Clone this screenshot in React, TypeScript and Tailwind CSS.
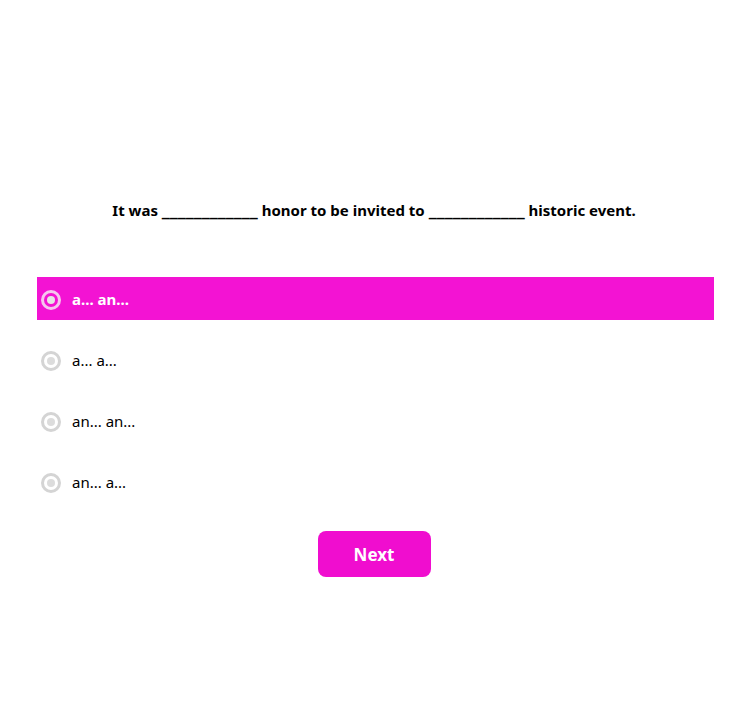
import React from "react";

const options = ["a... an...", "a... a...", "an... an...", "an... a..."];

function Radio({ selected }: { selected: boolean }) {
  return (
    <span
      className={
        "flex h-[20px] w-[20px] shrink-0 items-center justify-center rounded-full border-[3px] " +
        (selected ? "border-[#f6c6ee]" : "border-[#d4d4d4]")
      }
    >
      <span className={"h-[8px] w-[8px] rounded-full " + (selected ? "bg-[#e6e6e6]" : "bg-[#dcdcdc]")} />
    </span>
  );
}

export default function App() {
  return (
    <div className="h-[701px] w-[748px] bg-white" style={{ fontFamily: '"Noto Sans", "Open Sans", sans-serif' }}>
      <div className="h-[222px] pt-[198px] text-center text-[15px] font-bold leading-[24px] text-black">
        It was <span className="font-['DejaVu_Sans'] text-[16px] leading-[24px]">____________</span> honor to be invited to{" "}
        <span className="font-['DejaVu_Sans'] text-[16px] leading-[24px]">____________</span> historic event.
      </div>
      <div className="mt-[55px] ml-[37px] flex w-[677px] flex-col gap-[18px]">
        {options.map((o, i) => (
          <div
            key={o}
            className={
              "flex h-[43px] items-center gap-[11px] pl-[4px] pt-[2px] text-[15px] " +
              (i === 0 ? "bg-[#f313d3] font-bold text-white" : "text-black")
            }
          >
            <Radio selected={i === 0} />
            <span>{o}</span>
          </div>
        ))}
      </div>
      <div className="mt-[28px] flex justify-center">
        <button className="h-[46px] w-[113px] rounded-[8px] bg-[#f00dcf] pt-[1px] text-[17px] font-bold text-white">
          Next
        </button>
      </div>
    </div>
  );
}
